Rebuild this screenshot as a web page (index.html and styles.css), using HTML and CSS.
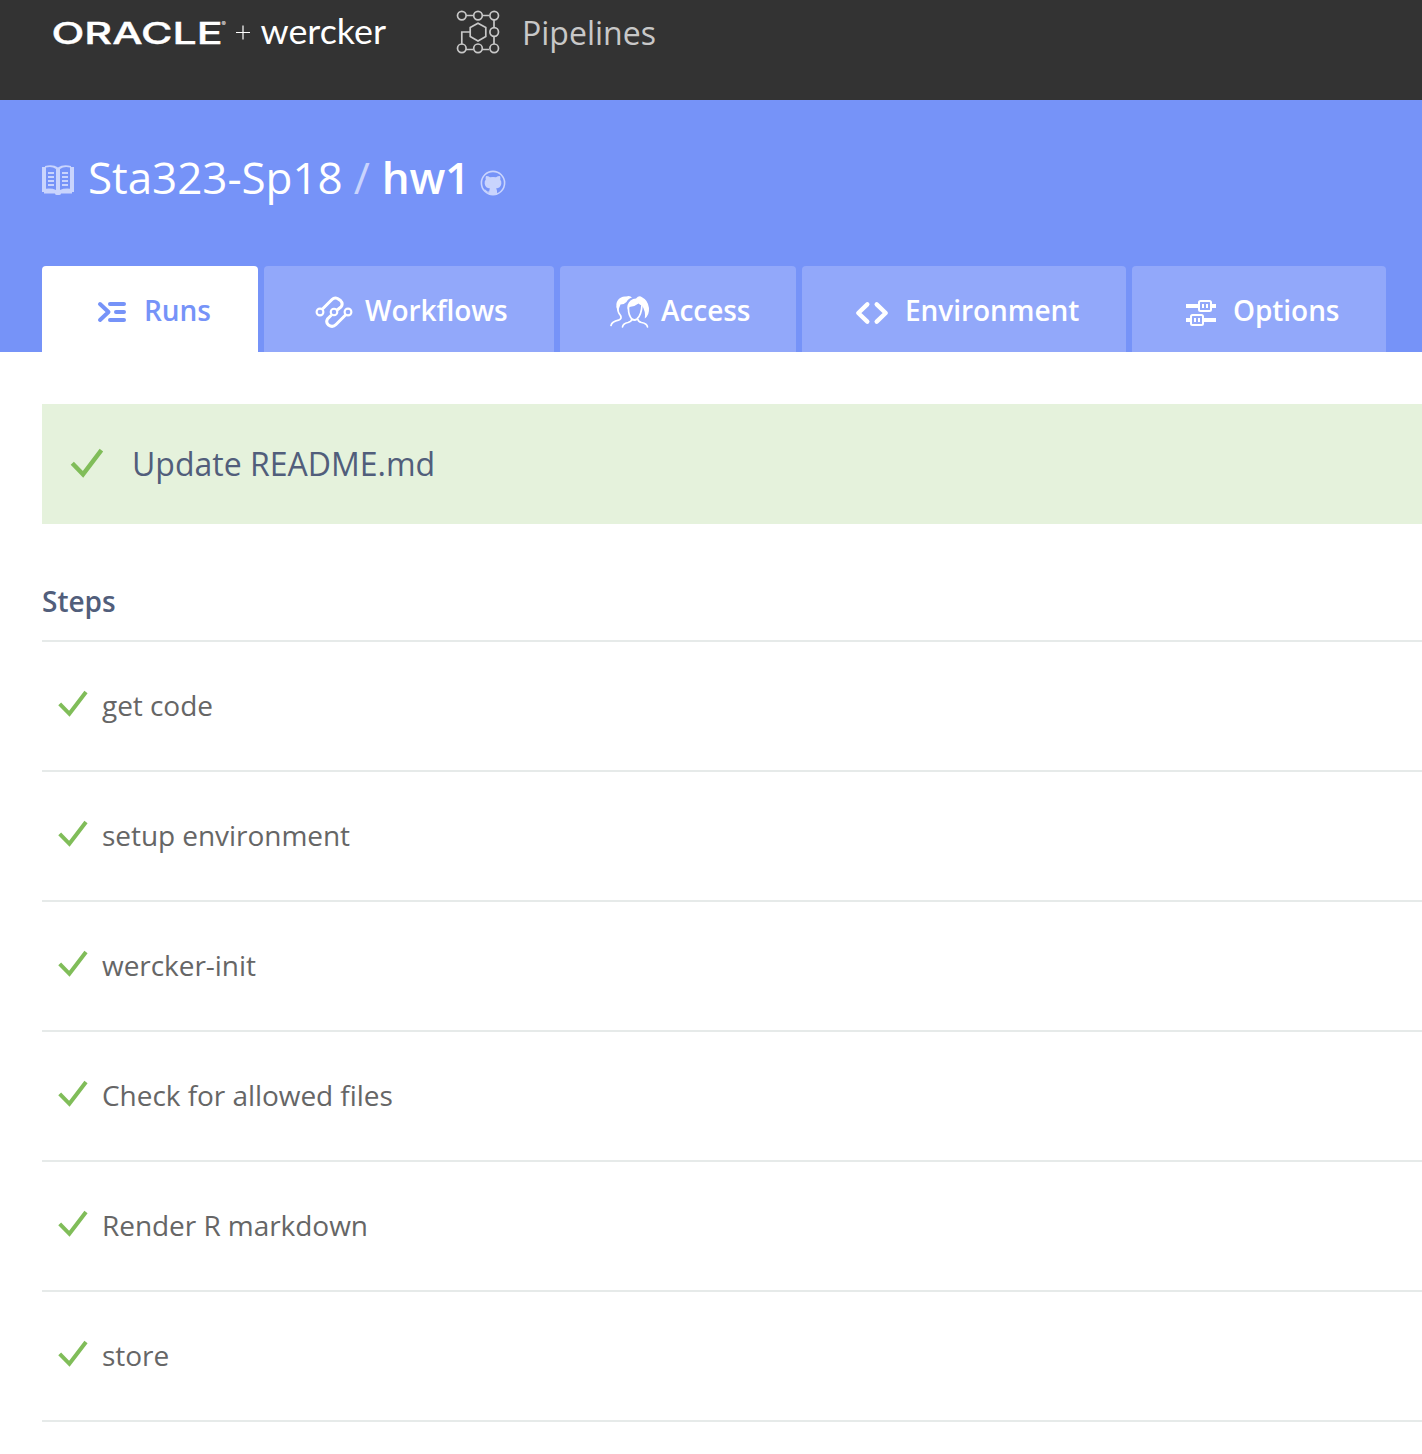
FILE: index.html
```html
<!DOCTYPE html>
<html lang="en">
<head>
<meta charset="utf-8">
<title>hw1 - Pipelines</title>
<link rel="stylesheet" href="styles.css">
</head>
<body>
<svg class="defs" width="0" height="0" aria-hidden="true">
  <symbol id="check" viewBox="0 0 30 28"><path d="M1.700 13.800 11.400 23.800 28 2" fill="none" stroke="currentColor" stroke-width="4"/></symbol>
</svg>
<header class="topbar">
  <svg class="brand" width="340" height="64" viewBox="0 0 340 64" fill="#fff">
    <text class="brand-oracle" x="-0.500" y="43.500" textLength="171" lengthAdjust="spacingAndGlyphs">ORACLE</text>
    <text class="brand-reg" x="169.500" y="26">®</text>
    <path d="M184 32.500h14M191 25.500v14" stroke="#fff" stroke-width="1.200"/>
    <text class="brand-wercker" x="208.500" y="43.500" textLength="125.500" lengthAdjust="spacingAndGlyphs">wercker</text>
  </svg>
  <svg class="pipe-icon" width="44" height="44" viewBox="0 0 44 44" fill="none" stroke="#c8c8c8" stroke-width="1.700">
    <path d="M10 5.500h7M26 5.500h7M38 10v7M38 26v8M10 39.500h7M26 39.500h7M5.800 34.500V22h8.200M22 13.200l7.800 4.400v9L22 31l-7.800-4.400v-9z"/>
    <circle cx="5.800" cy="5.600" r="4.300"/><circle cx="22" cy="5.600" r="4.300"/><circle cx="38.200" cy="5.600" r="4.300"/><circle cx="38.200" cy="22" r="4.300"/><circle cx="5.800" cy="38.300" r="4.300"/><circle cx="22" cy="38.300" r="4.300"/><circle cx="38.200" cy="38.300" r="4.300"/>
  </svg>
  <span class="product">Pipelines</span>
</header>
<section class="hero">
  <h1 class="title">
    <svg class="book" width="32" height="31" viewBox="0 0 32 31">
      <path d="M0 2h3V1q8-2 13 1.500Q21-1 29 1v1h3v25h-2v1.500H19q0 1.500-3 1.500t-3-1.500H2V27H0z" fill="#c9d4fd"/>
      <path d="M4 2.500q6-1.500 10 1.500v21q-4-2-10-1.300zM18 4q4-3 10-1.500v21.200q-6-.7-10 1.300z" fill="#7693f8"/>
      <path d="M6 8h6M6 12h6M6 16h6M6 20h6M20 8h6M20 12h6M20 16h6M20 20h6" stroke="#c9d4fd" stroke-width="2"/>
    </svg>
    <span class="owner">Sta323-Sp18</span><span class="slash">/</span><span class="repo">hw1</span>
    <svg class="github" width="26" height="26" viewBox="0 0 26 26">
      <circle cx="13" cy="13" r="11.600" fill="none" stroke="#c9d4fd" stroke-width="1.600"/>
      <path d="M6 6q2.500.1 4 1.300 3-.6 6 0Q17.600 6.100 20 6q.8 2 .2 3.500 1.600 1.800 1.100 4.400-.7 4-5.300 4.600 1 1 1 2.500v4H9v-2.300q-2.600.5-3.500-1.500Q5 20 4 19.500q1.500-.3 2.500 1.200 1 1.300 2.700.7.100-2 .8-2.900-4.600-.6-5.300-4.600Q4.200 11.300 5.800 9.500 5.200 8 6 6z" fill="#c9d4fd"/>
    </svg>
  </h1>
  <nav class="tabs">
    <a class="tab tab-runs active">
      <svg width="30" height="22" viewBox="0 0 30 22" fill="none" stroke="currentColor" stroke-width="4" stroke-linecap="round" stroke-linejoin="round"><path d="M3 3l8.500 8L3 19M13 3h14M19 11h8M13 19h14"/></svg>
      <span>Runs</span>
    </a>
    <a class="tab tab-workflows">
      <svg width="38" height="34" viewBox="0 0 38 34" fill="none" stroke="currentColor"><path d="M7.500 14 17 4.500Q19.500 2 22.500 3.500L25.500 5.500Q28.500 8.500 26 12L21.500 15.500M16.500 20 12.500 24Q10.500 27.500 13.500 30 17.500 33 21 29.500L31 19.500" stroke-width="3"/><circle cx="5" cy="17" r="3.400" stroke-width="2.100"/><circle cx="19" cy="17" r="3.300" stroke-width="2.100"/><circle cx="33" cy="17" r="3.400" stroke-width="2.100"/></svg>
      <span>Workflows</span>
    </a>
    <a class="tab tab-access">
      <svg width="40" height="34" viewBox="0 0 40 34" fill="none" stroke="currentColor" stroke-width="1.700" stroke-linecap="round" stroke-linejoin="round"><path d="M7.700 11Q7.300 17 10.500 20.500q1.700 3.300-2 4.700-6.500 1.300-7.500 5.300M18.500 12Q18 20 22 24q2.500 2 5 0 4.500-4 5-14M21.500 24.500q.3 2-3.500 3-5 1-5.500 4.500M28 24.500q0 2 3.500 3 5.500 1 6 4.500"/><path d="M7.200 14.500Q5 9 8 5q3-4 8-3.500 4-1.500 6 1-4 1-5.500 4.500Q14 9.500 10.500 9.500L8.500 14.500zM17.700 14.500Q16.500 9 20.500 5.500 23 3.500 26 3.500q3-3.500 6-1.300Q38 5 39 13q.5 7-4.200 10.500 1-7.500-2.800-13-2-.3-3.500-2Q25 11.500 19.500 12z" fill="currentColor" stroke="none"/></svg>
      <span>Access</span>
    </a>
    <a class="tab tab-env">
      <svg width="34" height="24" viewBox="0 0 34 24" fill="none" stroke="currentColor" stroke-width="4.400" stroke-linecap="round" stroke-linejoin="round"><path d="M12.300 3.300 3.300 12l9 8.700M21.700 3.300 30.700 12l-9 8.700"/></svg>
      <span>Environment</span>
    </a>
    <a class="tab tab-options">
      <svg width="30" height="26" viewBox="0 0 30 26" fill="none" stroke="currentColor"><path d="M0 6h12M26 6h4M0 20h4M18 20h12" stroke-width="4"/><rect x="13" y="1" width="12" height="10" rx="1.500" stroke-width="2"/><rect x="5" y="15" width="12" height="10" rx="1.500" stroke-width="2"/><path d="M17 4v4M21 4v4M9 18v4M13 18v4" stroke-width="2"/></svg>
      <span>Options</span>
    </a>
  </nav>
</section>
<main class="content">
  <div class="banner"><svg width="34" height="31"><use href="#check"/></svg><span>Update README.md</span></div>
  <h2 class="heading">Steps</h2>
  <ul class="steps">
    <li><svg width="30" height="28"><use href="#check"/></svg><span>get code</span></li>
    <li><svg width="30" height="28"><use href="#check"/></svg><span>setup environment</span></li>
    <li><svg width="30" height="28"><use href="#check"/></svg><span>wercker-init</span></li>
    <li><svg width="30" height="28"><use href="#check"/></svg><span>Check for allowed files</span></li>
    <li><svg width="30" height="28"><use href="#check"/></svg><span>Render R markdown</span></li>
    <li><svg width="30" height="28"><use href="#check"/></svg><span>store</span></li>
  </ul>
</main>
</body>
</html>
```
FILE: styles.css
```css
* { box-sizing: border-box; }
body { margin: 0; background: #fff; font-family: "Open Sans", sans-serif; color: #666; overflow-x: hidden; }
svg { display: block; flex: none; }
.defs { display: none; }

.topbar { height: 100px; background: #333; display: flex; align-items: flex-start; padding-left: 52px; }
.brand-oracle { font: 500 30.500px Inter, sans-serif; stroke: #fff; stroke-width: .4px; }
.brand-reg { font: 6.500px Inter, sans-serif; }
.brand-wercker { font: 400 34px Lato, sans-serif; }
.pipe-icon { margin: 10px 0 0 64px; }
.product { margin-left: 22px; font-size: 32px; line-height: 66px; color: #c8c8c8; }

.hero { height: 252px; background: #7693f8; padding: 48px 0 0 42px; display: flex; flex-direction: column; justify-content: space-between; }
.title { margin: 0; display: flex; align-items: flex-start; font-size: 44px; font-weight: 400; line-height: 58px; color: #fff; white-space: nowrap; }
.book { margin: 17px 14px 0 0; }
.slash { margin: 0 12px 0 11px; color: #c9d4fd; }
.repo { font-weight: 600; letter-spacing: -.4px; }
.owner { letter-spacing: -.05px; }
.github { margin: 22px 0 0 10px; }

.tabs { display: flex; gap: 6px; height: 86px; }
.tab { display: flex; align-items: center; height: 86px; border-radius: 4px 4px 0 0; background: #92a8fa; color: #fff; font-size: 28px; font-weight: 600; white-space: nowrap; letter-spacing: -.06px; }
.tab.active { background: #fff; color: #7693f8; }
.tab span { padding-top: 2px; }
.tab svg { margin-top: 6px; }
.tab-runs { width: 216px; padding-left: 55px; }
.tab-runs svg { margin-right: 17px; }
.tab-workflows { width: 290px; padding-left: 51px; }
.tab-workflows svg { margin: 5px 12px 0 0; }
.tab-access { width: 236px; padding-left: 50px; }
.tab-access svg { margin-right: 11px; }
.tab-env { width: 324px; padding-left: 53px; }
.tab-env svg { margin: 8px 16px 0 0; }
.tab-options { width: 254px; padding-left: 54px; }
.tab-options svg { margin: 8px 17px 0 0; }

.content { padding: 52px 0 0 42px; }
.banner { height: 120px; padding-left: 28px; display: flex; align-items: center; background: #e5f2dc; color: #515e7b; font-size: 32px; }
.banner svg { margin: -1px 28px 0 0; color: #80bd59; }
.banner span { padding-bottom: 2px; }
.heading { margin: 0; padding-top: 57px; height: 118px; border-bottom: 2px solid #e6eae9; font-size: 28px; line-height: 40px; font-weight: 600; color: #515e7b; }
.steps { margin: 0; padding: 0; list-style: none; }
.steps li { height: 130px; padding-left: 16px; border-bottom: 2px solid #e6eae9; display: flex; align-items: center; font-size: 28px; letter-spacing: -.05px; }
.steps svg { margin: -4px 14px 0 0; color: #80bd59; }
.steps span { padding-bottom: 2px; }
```
